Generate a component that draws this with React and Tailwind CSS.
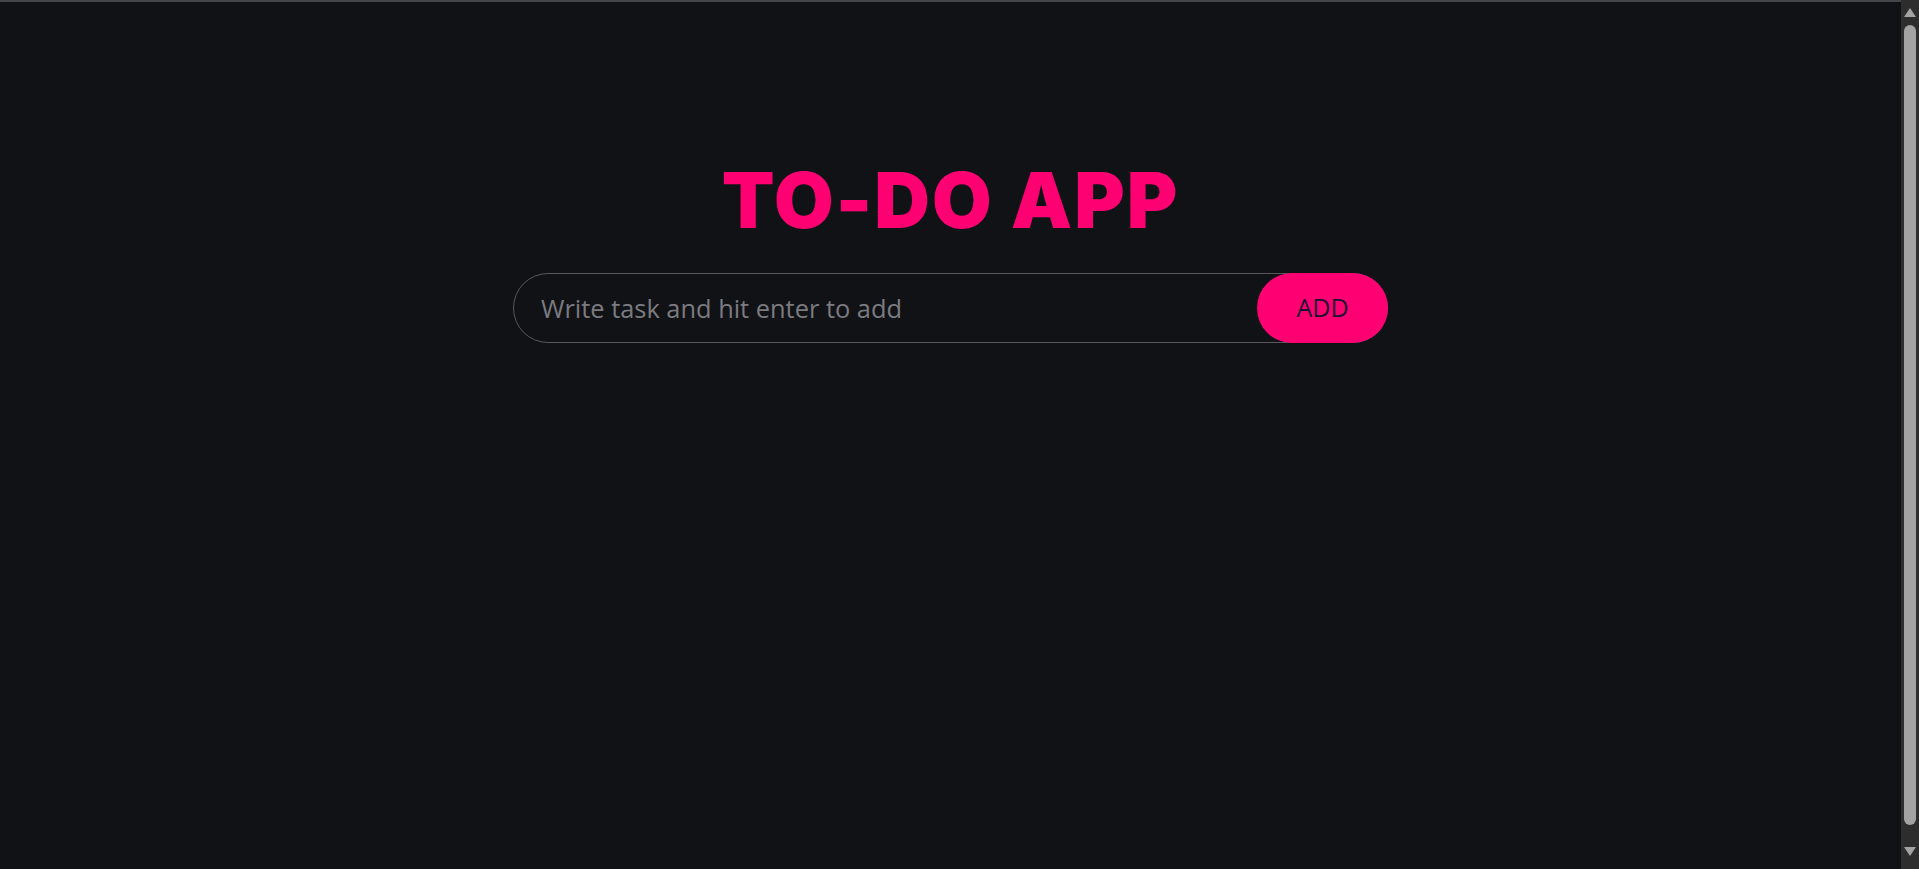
import React from "react";

function Scrollbar() {
  return (
    <aside className="w-[18px] h-full bg-[#2d2d2d] flex flex-col items-center shrink-0">
      <svg width="18" height="25" viewBox="0 0 18 25" className="shrink-0">
        <polygon points="9,8 15,17 3,17" fill="#a3a3a3" />
      </svg>
      <div className="w-[12px] h-[800px] rounded-full bg-[#a3a3a3] shrink-0" />
      <div className="flex-1" />
      <svg width="18" height="30" viewBox="0 0 18 30" className="shrink-0">
        <polygon points="3,8 15,8 9,17" fill="#a3a3a3" />
      </svg>
    </aside>
  );
}

export default function App() {
  return (
    <div className="h-screen w-full flex bg-[#111216] overflow-hidden">
      <main className="flex-1 border-t-2 border-[#45454a] flex flex-col items-center pt-[160px]">
        <h1 className="text-[77px] leading-none font-black tracking-[2px] text-[#ff0073] font-['Inter',sans-serif]">
          TO-DO APP
        </h1>
        <div className="relative mt-[34px] w-[875px] h-[70px]">
          <input
            type="text"
            placeholder="Write task and hit enter to add"
            className="w-full h-full rounded-full border border-[#58585e] bg-transparent pl-[27px] pr-[140px] text-[25.4px] text-white placeholder:text-[#7b7b80] outline-none font-['Open_Sans',sans-serif]"
          />
          <button className="absolute right-0 top-0 h-[70px] w-[131px] rounded-full bg-[#ff0073] text-[25px] font-medium text-[#1c1230] font-['Open_Sans',sans-serif]">
            ADD
          </button>
        </div>
      </main>
      <Scrollbar />
    </div>
  );
}
